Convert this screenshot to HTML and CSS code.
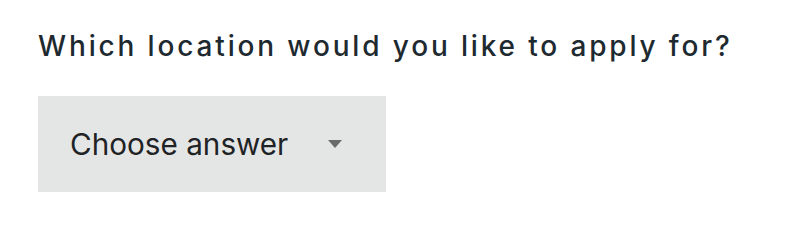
FILE: index.html
```html
<!DOCTYPE html>
<html lang="en">
<head>
<meta charset="utf-8">
<link rel="stylesheet" href="styles.css">
<title>Location</title>
</head>
<body>
<div class="question">
  <label class="question-label" for="location">Which location would you like to apply for?</label>
  <div class="select" id="location">
    <span class="select-value">Choose answer</span>
    <span class="select-arrow" aria-hidden="true"></span>
  </div>
</div>
</body>
</html>
```

FILE: styles.css
```css
html, body {
  margin: 0;
  padding: 0;
  background: #ffffff;
}
body {
  font-family: Inter, "Noto Sans", sans-serif;
}
.question {
  padding: 29px 38px 0;
  display: flex;
  flex-direction: column;
  align-items: flex-start;
  gap: 33px;
}
.question-label {
  font-size: 28px;
  line-height: 34px;
  font-weight: 500;
  letter-spacing: 2.85px;
  color: #1e2a30;
  white-space: nowrap;
}
.select {
  box-sizing: border-box;
  width: 348px;
  height: 96px;
  background: #e4e6e5;
  display: flex;
  align-items: center;
  justify-content: space-between;
  padding: 0 44px 0 32px;
}
.select-value {
  font-size: 29.7px;
  color: #1f2326;
}
.select-arrow {
  width: 0;
  height: 0;
  border-left: 7px solid transparent;
  border-right: 7px solid transparent;
  border-top: 8px solid #6b6b6b;
}
```
